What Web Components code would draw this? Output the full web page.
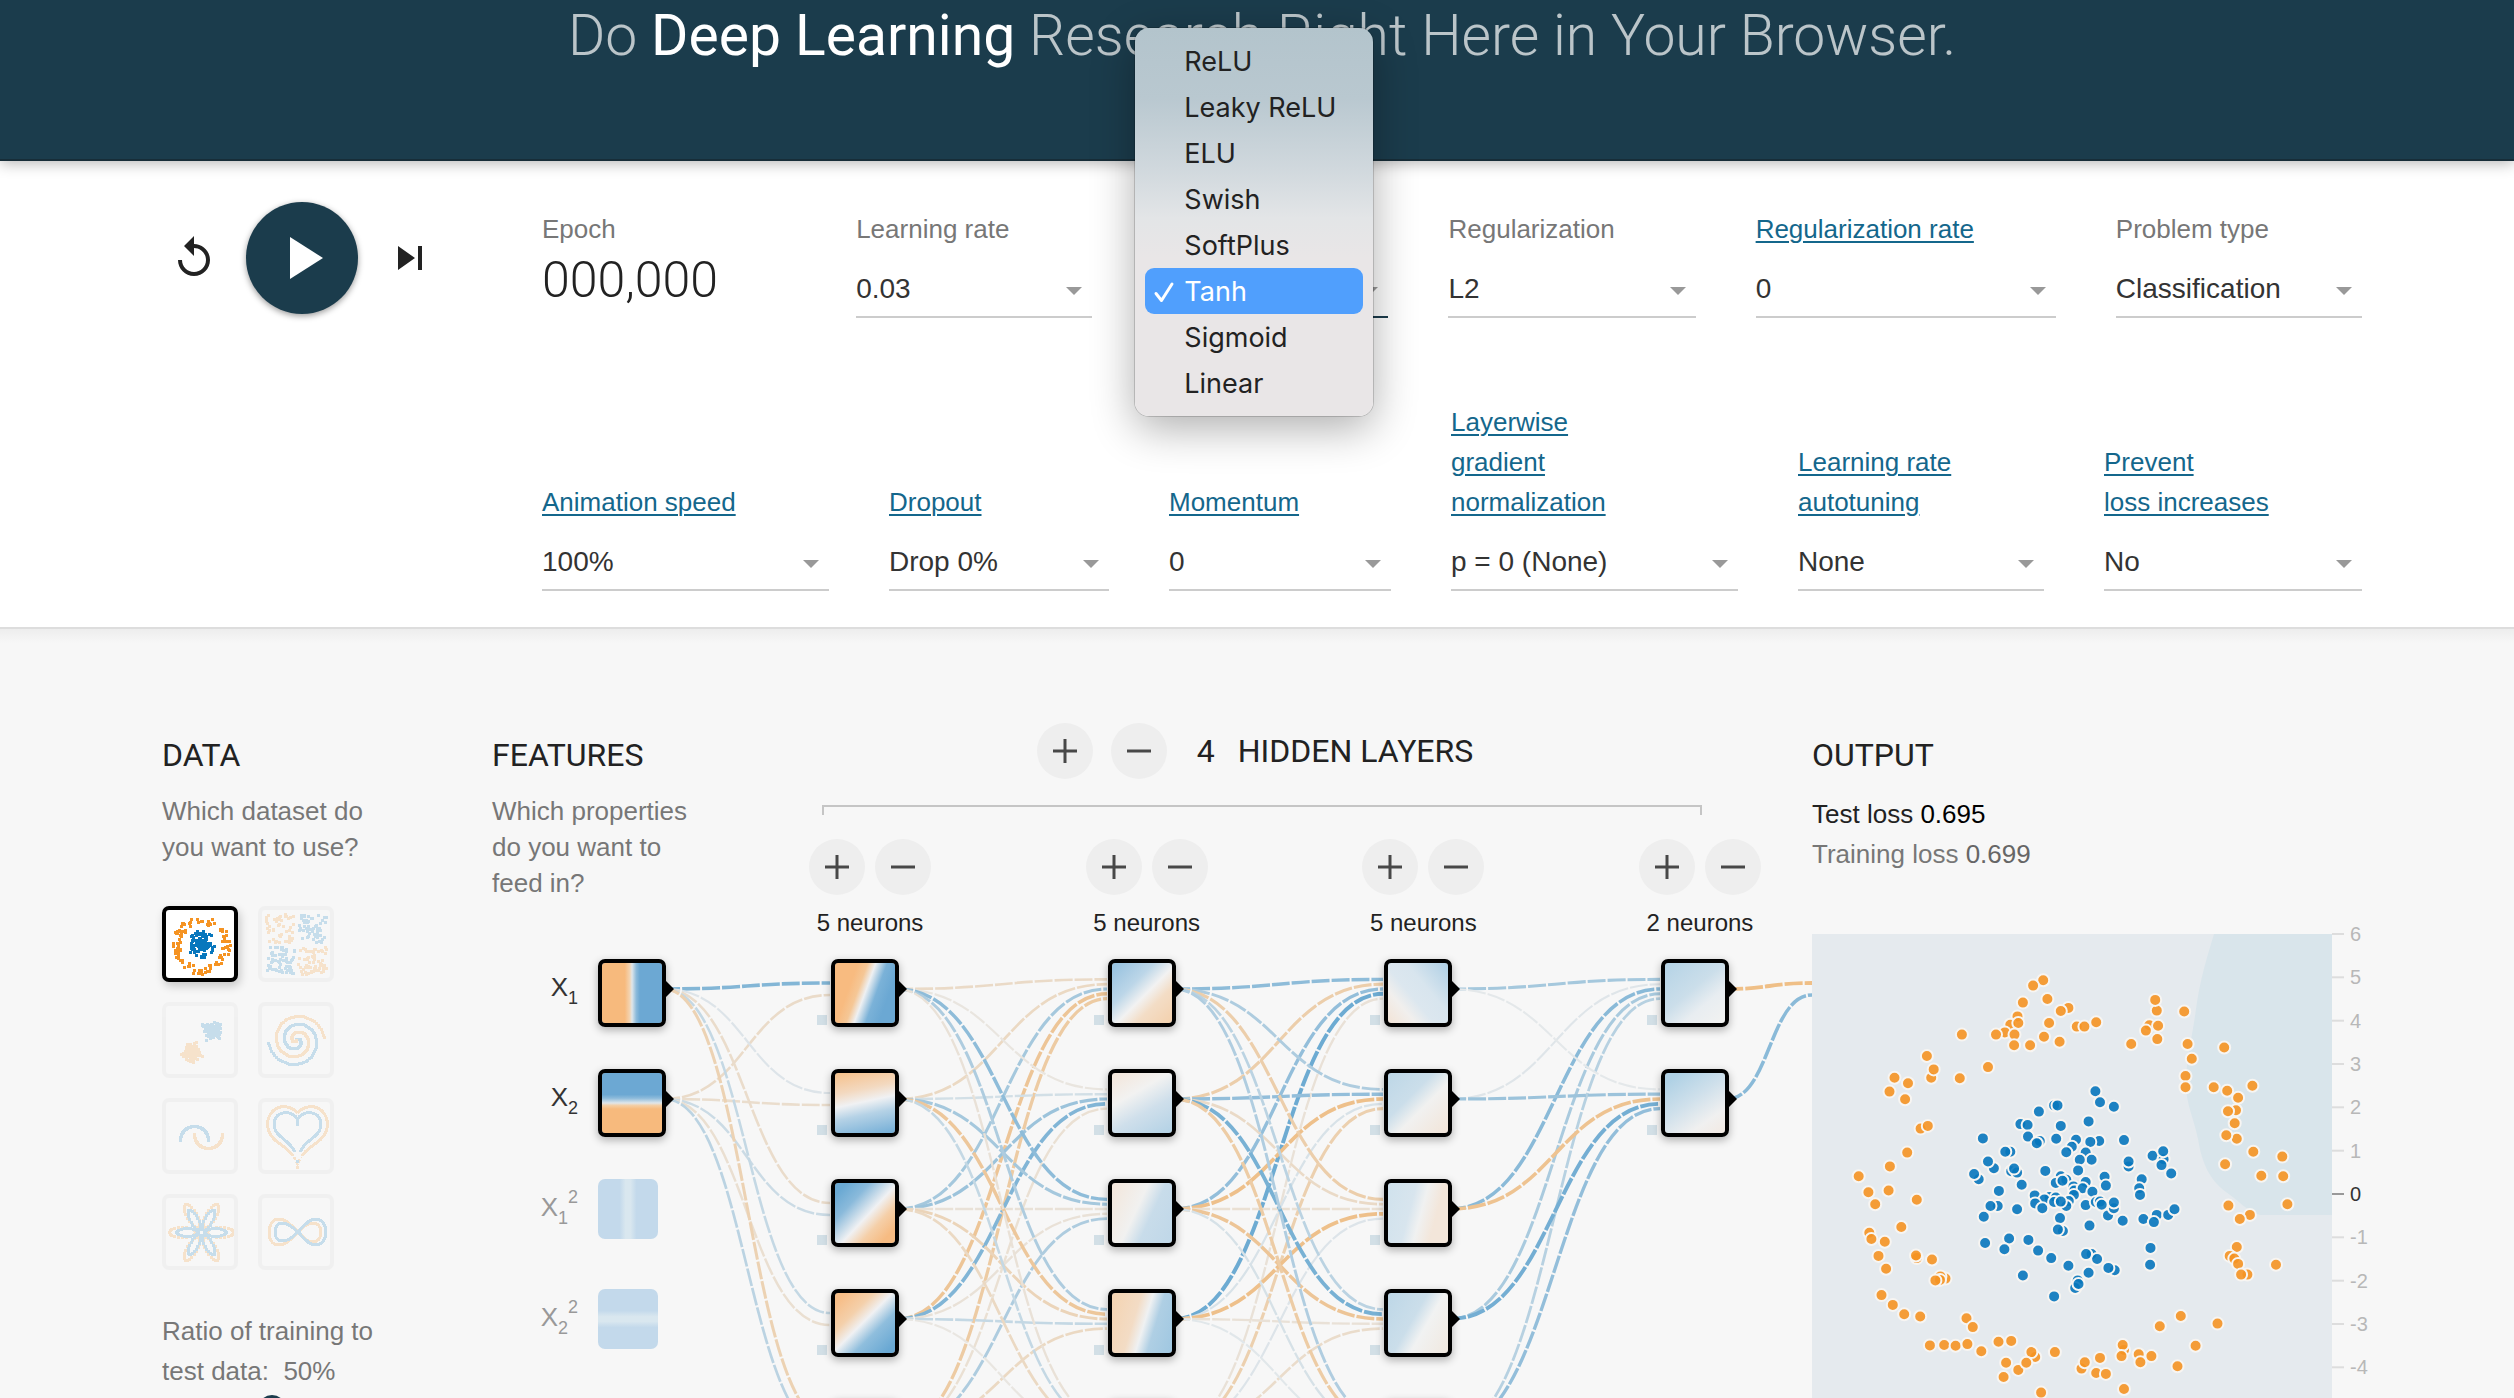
<!DOCTYPE html>
<html lang="en">
<head>
<meta charset="utf-8">
<title>Deep Learning Playground</title>
<style>
  html, body { margin: 0; background: #fff; }
  body { font-family: "Liberation Sans", Arial, sans-serif; font-size: 26px; color: #222; }
</style>
</head>
<body>
<playground-app></playground-app>

<template id="t-app">
  <style>
    :host { display: flex; flex-direction: column; height: 100vh; overflow: hidden; }
  </style>
  <page-banner>Do <b slot="strong">Deep Learning</b><span slot="rest">Research Right Here in Your Browser.</span></page-banner>
  <control-bar></control-bar>
  <main-part></main-part>
</template>

<template id="t-banner">
  <style>
    :host { display: block; box-sizing: border-box; flex: none; height: 161px; padding: 6px 152px 0 162px; background: #1b3c4c; border-bottom: 2px solid #172d38; box-shadow: 0 2px 14px rgba(0,0,0,.3); position: relative; z-index: 1; }
    h1 { margin: 0; font: 300 57px/60px Roboto, sans-serif; text-align: center; color: rgba(255,255,255,.7); white-space: nowrap; }
    ::slotted(b) { font-weight: 400; color: #fff; }
  </style>
  <h1><slot></slot><slot name="strong"></slot> <slot name="rest"></slot></h1>
</template>

<template id="t-controls">
  <style>
    :host { display: flex; flex: none; padding: 41px 152px 36px 162px; position: relative; z-index: 2; }
    .play { flex: none; width: 372px; padding-left: 8px; display: flex; gap: 28px; align-items: center; height: 112px; }
    button { border: 0; padding: 0; background: none; color: #222; display: block; width: 48px; height: 48px; }
    button svg { display: block; fill: currentColor; }
    .go { width: 112px; height: 112px; border-radius: 50%; background: #1b3c4c; color: #fff; padding: 20px; box-shadow: 0 2px 6px rgba(0,0,0,.4); }
    .rows { flex: 1; padding-top: 7px; display: flex; flex-direction: column; gap: 84px; }
    .row { display: grid; column-gap: 60px; align-items: end; }
    .r1 { grid-template-columns: 254fr 236fr 236fr 247fr 300fr 246fr; }
    .r2 { grid-template-columns: 287fr 220fr 222fr 287fr 246fr 258fr; }
    .epoch { align-self: start; color: #777; line-height: 40px; }
    .epoch output { display: block; font: 300 50px/48px Roboto, sans-serif; margin-top: 7px; color: #222; }
  </style>
  <div class="play">
    <button aria-label="Reset"><svg width="48" height="48" viewBox="0 0 24 24"><path d="M12 5V1L7 6l5 5V7c3.31 0 6 2.69 6 6s-2.69 6-6 6-6-2.69-6-6H4c0 4.42 3.58 8 8 8s8-3.58 8-8-3.58-8-8-8z"/></svg></button>
    <button class="go" aria-label="Run"><svg width="72" height="72" viewBox="0 0 24 24"><path d="M8 5v14l11-7z"/></svg></button>
    <button aria-label="Step"><svg width="48" height="48" viewBox="0 0 24 24"><path d="M6 18l8.5-6L6 6v12zM16 6v12h2V6h-2z"/></svg></button>
  </div>
  <div class="rows">
    <div class="row r1">
      <div class="epoch">Epoch<output>000,000</output></div>
      <select-field label="Learning rate" value="0.03"></select-field>
      <select-field label="Activation" value="Tanh" open><option-menu slot="menu" chosen="Tanh" items="ReLU,Leaky ReLU,ELU,Swish,SoftPlus,Tanh,Sigmoid,Linear"></option-menu></select-field>
      <select-field label="Regularization" value="L2"></select-field>
      <select-field label="Regularization rate" value="0" link></select-field>
      <select-field label="Problem type" value="Classification"></select-field>
    </div>
    <div class="row r2">
      <select-field label="Animation speed" value="100%" link></select-field>
      <select-field label="Dropout" value="Drop 0%" link></select-field>
      <select-field label="Momentum" value="0" link></select-field>
      <select-field label="Layerwise|gradient|normalization" value="p = 0 (None)" link></select-field>
      <select-field label="Learning rate|autotuning" value="None" link></select-field>
      <select-field label="Prevent|loss increases" value="No" link></select-field>
    </div>
  </div>
</template>

<template id="t-field">
  <style>
    :host { display: block; position: relative; min-width: 0; }
    label { display: block; color: #777; line-height: 40px; white-space: nowrap; }
    a { color: #14678c; text-decoration: underline; text-decoration-thickness: 2px; text-underline-offset: 3px; }
    .box { display: grid; }
    .box > * { grid-area: 1 / 1; }
    select { appearance: none; width: 100%; height: 69px; padding: 24px 30px 11px 0; border: 0; border-bottom: 2px solid #ccc; border-radius: 0; background: none; font: 28px/32px "Liberation Sans", Arial, sans-serif; color: #333; }
    :host([open]) select { border-color: #1b3c4c; }
    svg { justify-self: end; margin: 38px 10px 0 0; pointer-events: none; fill: #999; }
    ::slotted(option-menu) { position: absolute; left: -17px; bottom: -98px; z-index: 3; }
  </style>
  <label for="s"></label>
  <div class="box"><select id="s"><option></option></select><svg width="16" height="8"><path d="M0 0H16L8 8Z"/></svg></div>
  <slot name="menu"></slot>
</template>

<template id="t-menu">
  <style>
    :host { display: block; width: 238px; box-sizing: border-box; padding: 10px; border-radius: 14px; background: linear-gradient(#b3c4cc 0, #b9c8d0 70px, #d0d8dd 140px, #e3e5e7 190px, #e9e6e7 230px); box-shadow: 0 0 0 1px rgba(0,0,0,.16), 0 12px 44px rgba(0,0,0,.32); }
    div { display: flex; flex-direction: column; }
    button { display: flex; align-items: center; height: 46px; padding: 2px 0 0; border: 0; border-radius: 9px; background: none; font: 27px/32px Inter, sans-serif; color: #222; text-align: left; }
    button svg { width: 39px; height: 24px; flex: none; }
    button[aria-selected=true] { background: #509ffd; color: #fff; }
  </style>
  <div role="listbox" aria-label="Activation"></div>
</template>

<template id="t-main">
  <style>
    :host { display: grid; grid-template-columns: 330px 1fr 550px; flex: 1; min-height: 0; padding: 94px 152px 0 162px; border-top: 2px solid #ddd; background: linear-gradient(#ededed, #f7f7f7 14px); }
  </style>
  <data-panel></data-panel>
  <network-panel></network-panel>
  <output-panel></output-panel>
</template>

<template id="t-data">
  <style>
    :host { display: block; padding-top: 13px; }
    h2 { margin: 0 0 19px; font: 400 32px/38px Roboto, sans-serif; }
    p { margin: 0 0 41px; width: 220px; line-height: 36px; color: #777; }
    .grid { display: grid; grid-template-columns: 76px 76px; gap: 20px; margin-bottom: 41px; }
    label { display: block; width: 230px; line-height: 40px; color: #777; white-space: pre-line; }
    input { appearance: none; display: block; width: 220px; height: 28px; margin: 4px 0 0; background: linear-gradient(#bbb,#bbb) center / 100% 4px no-repeat; }
    input::-webkit-slider-thumb { appearance: none; width: 28px; height: 28px; border-radius: 50%; background: #1b3c4c; }
  </style>
  <h2>DATA</h2>
  <p>Which dataset do you want to use?</p>
  <div class="grid">
    <data-thumb kind="circle" selected></data-thumb><data-thumb kind="xor"></data-thumb>
    <data-thumb kind="gauss"></data-thumb><data-thumb kind="spiral"></data-thumb>
    <data-thumb kind="moons"></data-thumb><data-thumb kind="heart"></data-thumb>
    <data-thumb kind="flower"></data-thumb><data-thumb kind="infinity"></data-thumb>
  </div>
  <label for="ratio">Ratio of training to
test data:&nbsp; 50%</label>
  <input id="ratio" type="range" min="10" max="90" value="50">
</template>

<template id="t-thumb">
  <style>
    :host { display: block; }
    button { display: block; box-sizing: border-box; width: 76px; height: 76px; padding: 0; border: 4px solid rgba(0,0,0,.12); border-radius: 7px; background: none; opacity: .2; overflow: hidden; }
    :host([selected]) button { border-color: #000; background: #fff; opacity: 1; box-shadow: 2px 4px 10px rgba(0,0,0,.2); }
    svg { display: block; }
  </style>
  <button></button>
</template>

<template id="t-net">
  <style>
    :host { display: block; }
    .top { display: flex; height: 236px; }
    .intro { flex: none; width: 317px; padding-top: 13px; }
    h2 { margin: 0 0 19px; font: 400 32px/38px Roboto, sans-serif; }
    .intro p { margin: 0; width: 206px; line-height: 36px; color: #777; }
    .layers { width: 952px; }
    .count { display: flex; justify-content: center; align-items: center; gap: 18px; margin: 0 59px 26px 13px; padding-right: 14px; height: 56px; font: 400 32px/38px Roboto, sans-serif; }
    .count span { margin-left: 12px; }
    .count strong { font-weight: 400; margin-left: 5px; }
    .bracket { height: 8px; margin: 0 59px 24px 13px; border: 2px solid #c5c5c5; border-bottom: 0; }
    .groups { display: flex; justify-content: space-between; }
    .group { width: 122px; display: flex; flex-wrap: wrap; justify-content: space-between; font-size: 24px; line-height: 32px; }
    .group div { width: 100%; text-align: center; margin-top: 12px; white-space: nowrap; }
    .graph { position: relative; height: 560px; }
    .graph > svg { display: block; width: 100%; height: 560px; overflow: visible; }
    graph-node { position: absolute; }
    sub, sup { font-size: 18px; line-height: 0; }
    sub { vertical-align: -8px; }
    sup { vertical-align: 13px; }
  </style>
  <div class="top">
    <div class="intro"><h2>FEATURES</h2><p>Which properties do you want to feed in?</p></div>
    <div class="layers">
      <div class="count"><round-button kind="plus"></round-button><round-button kind="minus"></round-button><span>4</span><strong>HIDDEN LAYERS</strong></div>
      <div class="bracket"></div>
      <div class="groups"></div>
    </div>
  </div>
  <div class="graph"></div>
</template>

<template id="t-round">
  <style>
    :host { display: block; }
    button { display: block; width: 56px; height: 56px; padding: 0; border: 0; border-radius: 50%; background: #eee; }
    svg { display: block; margin: auto; stroke: #484848; stroke-width: 3; }
  </style>
  <button><svg width="24" height="24"><path/></svg></button>
</template>

<template id="t-node">
  <style>
    :host { display: flex; }
    .name { position: absolute; right: 100%; margin-right: 20px; line-height: 32px; padding-top: 12px; white-space: nowrap; color: #333; }
    .map { box-sizing: border-box; width: 68px; height: 68px; border: 4px solid #000; border-radius: 7px; box-shadow: 0 3px 8px rgba(0,0,0,.3); background: var(--map) padding-box; }
    :host([off]) .map { width: 60px; height: 60px; border: 0; box-shadow: none; }
    :host([off]) .name { color: #999; }
  </style>
  <div class="name"><slot></slot></div><div class="map"></div>
</template>

<template id="t-out">
  <style>
    :host { display: block; padding-top: 13px; }
    h2 { margin: 0 0 20px; font: 400 32px/38px Roboto, sans-serif; }
    p { margin: 0; line-height: 40px; }
    p b { font-weight: 400; color: #000; }
    .train { color: #777; }
    .train b { color: #666; }
    svg { display: block; margin-top: 60px; overflow: visible; font: 20px "Liberation Sans", Arial, sans-serif; }
  </style>
  <h2>OUTPUT</h2>
  <p>Test loss <b>0.695</b></p>
  <p class="train">Training loss <b>0.699</b></p>
</template>

<script>
const ORANGE = '#f59322', BLUE = '#0877bd';
class Part extends HTMLElement {
  constructor(id) {
    super();
    this.attachShadow({ mode: 'open' }).append(document.getElementById(id).content.cloneNode(true));
  }
  $(q) { return this.shadowRoot.querySelector(q); }
}
const define = (tag, id, ready) => customElements.define(tag, class extends Part {
  constructor() { super(id); }
  connectedCallback() { if (ready && !this.done) { this.done = true; ready(this); } }
});

define('page-banner', 't-banner');

define('option-menu', 't-menu', el => {
  el.$('div').innerHTML = el.getAttribute('items').split(',').map(name => {
    const on = name === el.getAttribute('chosen');
    return `<button role="option" aria-selected="${on}"><svg viewBox="0 0 39 24">${on ? '<path d="M11 13.500L16.500 20.500L27 4" fill="none" stroke="#fff" stroke-width="3" stroke-linecap="round" stroke-linejoin="round"/>' : ''}</svg>${name}</button>`;
  }).join('');
});

define('select-field', 't-field', el => {
  const text = el.getAttribute('label').replaceAll('|', '<br>');
  el.$('label').innerHTML = el.hasAttribute('link') ? `<a href="#">${text}</a>` : text;
  el.$('option').textContent = el.getAttribute('value');
});

define('control-bar', 't-controls');

define('round-button', 't-round', el => {
  const plus = el.getAttribute('kind') === 'plus';
  el.$('button').setAttribute('aria-label', plus ? 'Add' : 'Remove');
  el.$('path').setAttribute('d', plus ? 'M0 12H24M12 0V24' : 'M0 12H24');
});

/* small dataset pictures: squares of 3px in a 68px field */
const makeRandom = seed => () => (seed = (seed * 16807) % 2147483647) / 2147483647;
function thumbPoints(kind) {
  const rnd = makeRandom(4711), out = [];
  const add = (x, y, c) => out.push([Math.round(x), Math.round(y), c]);
  const normal = () => (rnd() + rnd() + rnd() + rnd() - 2) * 1.7;
  if (kind === 'circle') {
    for (let i = 0; i < 110; i++) { const a = rnd() * 6.283, r = 21 + rnd() * 8; add(35 + r * Math.sin(a), 35 + r * Math.cos(a), ORANGE); }
    for (let i = 0; i < 130; i++) { const a = rnd() * 6.283, r = rnd() * 14; add(35 + r * Math.sin(a), 34 + r * Math.cos(a), BLUE); }
  } else if (kind === 'xor') {
    for (let i = 0; i < 240; i++) {
      let x = rnd() * 56 - 28, y = rnd() * 56 - 28; x += Math.sign(x) * 2; y += Math.sign(y) * 2;
      add(34 + x, 34 - y, x * y > 0 ? BLUE : ORANGE);
    }
  } else if (kind === 'gauss') {
    for (let i = 0; i < 130; i++) { add(46 + normal() * 4, 24 + normal() * 4, BLUE); add(25 + normal() * 4, 46 + normal() * 4, ORANGE); }
  } else if (kind === 'spiral') {
    for (const [d, c] of [[0, BLUE], [Math.PI, ORANGE]])
      for (let i = 0; i < 110; i++) { const k = i / 110, t = 3.5 * Math.PI * k + d; add(34 + 28 * k * Math.sin(t), 34 - 28 * k * Math.cos(t), c); }
  } else if (kind === 'moons') {
    for (let i = 0; i <= 50; i++) { const a = Math.PI * i / 50; add(28 - 14 * Math.cos(a), 38 - 14 * Math.sin(a), BLUE); add(42 - 14 * Math.cos(a), 32 + 14 * Math.sin(a), ORANGE); }
  } else if (kind === 'flower') {
    for (const [far, len, wide, c] of [[19, 13, 5, ORANGE], [14, 11, 4, BLUE]])
      for (let p = 0; p < 6; p++)
        for (let i = 0; i < 20; i++) {
          const t = i / 20 * 6.2832, a = p * Math.PI / 3, u = far + len * Math.cos(t), v = wide * Math.sin(t);
          add(35 + u * Math.cos(a) - v * Math.sin(a), 34 + u * Math.sin(a) + v * Math.cos(a), c);
        }
  }
  return out;
}
const thumbPaths = {
  heart: `<path stroke="${ORANGE}" d="M35.500 11C29 3 17 3 11 9C3 17 4 30 13 38C20 44 27 47 31 54M35.500 11C42 3 54 3 60 9C68 17 67 30 58 38C51 44 44 47 40 54"/>
    <path stroke="${BLUE}" d="M35.500 24V17C31 10 22 9 16 13C10 19 11 28 18 34C24 39 30 43 33 50M35.500 17C40 10 49 9 55 13C61 19 60 28 53 34C47 39 41 43 38 50"/>
    <path stroke="${ORANGE}" stroke-dasharray="3 2" d="M32 55L35.500 62L39 55M34 65H37"/><path stroke="${BLUE}" d="M34 59H37"/>`,
  infinity: `<path stroke="${ORANGE}" d="M36 34C30 28 24 21 17 21C10 21 7 28 7 34C7 41 10 47 17 47C24 47 30 41 36 34C41 29 45 25 50 25C56 25 59 29 59 34C59 40 56 44 50 44C45 44 41 39 36 34Z"/>
    <path stroke="${BLUE}" d="M36 34C30 29 26 25 21 25C15 25 13 29 13 34C13 40 15 43 21 43C26 43 30 40 36 34C42 28 47 21 53 21C60 21 64 27 64 34C64 41 60 47 53 47C47 47 42 40 36 34Z"/>`
};
define('data-thumb', 't-thumb', el => {
  const kind = el.getAttribute('kind');
  const body = thumbPaths[kind] ? `<g fill="none" stroke-width="3">${thumbPaths[kind]}</g>`
    : thumbPoints(kind).map(([x, y, c]) => `<rect x="${x - 1}" y="${y - 1}" width="3" height="3" fill="${c}"/>`).join('');
  el.$('button').setAttribute('aria-label', kind);
  el.$('button').innerHTML = `<svg width="68" height="68" shape-rendering="crispEdges">${body}</svg>`;
});
define('data-panel', 't-data');

define('graph-node', 't-node');

/* weights[layer][destination][source] */
const weights = [
  [[.45, -.17], [.05, -.15], [-.16, .13], [.16, -.13], [-.28, .2]],
  [[-.18, -.2, .3, -.42, -.36], [-.06, .1, .34, .46, -.12], [.4, .3, -.1, -.1, .26], [.26, -.4, -.25, .16, -.2], [-.1, .16, -.2, -.05, .1]],
  [[.4, -.32, .38, .55, -.1], [.26, .38, -.48, .07, -.3], [-.32, -.18, -.12, -.48, .05], [.2, .5, -.42, -.1, -.16], [.25, -.35, .08, .03, .1]],
  [[.3, .04, .42, .28, .22], [.02, .34, -.45, .52, .38]],
  [[-.5, .42]]
];
const columns = [106, 339, 616, 892, 1169, 1320];
const maps = [
  ['linear-gradient(90deg,#f7ba7d 38%,#f3d3b0 46%,#dfe6ea 50%,#8dbbdb 57%,#6ca8d3 63%)', 'linear-gradient(#6ca8d3 36%,#8dbbdb 42%,#dfe6ea 50%,#f3cfa6 54%,#f7ba7d 60%)',
   'linear-gradient(90deg,#c3d9eb 36%,#d9e7ef 46%,#d9e7ef 54%,#c3d9eb 64%)', 'linear-gradient(#c3d9eb 36%,#d9e7ef 46%,#d9e7ef 54%,#c3d9eb 64%)'],
  ['linear-gradient(110deg,#f8bb80 28%,#f5c796 40%,#eef0f2 50%,#7bb2d8 64%,#6ba8d3 80%)', 'linear-gradient(168deg,#f6c08a,#f3d9c0 30%,#f0f1f3 48%,#b5d2e6 66%,#72add6)',
   'linear-gradient(133deg,#6aa9d3 10%,#8abadb 30%,#f0f1f3 54%,#f5cfa8 70%,#f6bb82 88%)', 'linear-gradient(135deg,#f7bd86 8%,#f4d0ab 32%,#f0f1f3 48%,#8fbedd 66%,#69a8d3 92%)', 'linear-gradient(#000,#000)'],
  ['linear-gradient(135deg,#99c3e0 5%,#bcd6e8 35%,#f2f2f2 54%,#f3ddc6 70%,#f3d0ac)', 'linear-gradient(150deg,#f3e5d9,#f2f2f1 35%,#cfdfeb 62%,#b2d1e5)',
   'linear-gradient(115deg,#f3e6da,#f1f1f0 42%,#c8dcea 62%,#bfd7e8)', 'linear-gradient(107deg,#f4d3b0,#f3dcc5 38%,#eff1f2 53%,#afcfe4 68%,#9fc7e1)', 'linear-gradient(#000,#000)'],
  ['linear-gradient(50deg,#f3e4d7,#f1efed 25%,#dce7ef 42%,#d8e5ee 62%,#aecfe5)', 'linear-gradient(135deg,#bdd7e7,#cbdeea 38%,#f1f1f0 58%,#f2e4d8)',
   'linear-gradient(105deg,#d0e2ed,#d8e5ee 38%,#f0f1f1 54%,#f3e6da 75%)', 'linear-gradient(120deg,#bdd7e7,#cbdeea 42%,#f1f2f2 60%,#f0e8df)', 'linear-gradient(#000,#000)'],
  ['linear-gradient(140deg,#b4d3e6,#cbdeea 45%,#e8edf1 68%,#f2f2f1)', 'linear-gradient(145deg,#afd1e5 10%,#cfe0eb 45%,#f0f0f0 76%,#f2e9e2)']
];
const mix = w => {
  const from = [232, 234, 235], to = w < 0 ? [245, 147, 34] : [8, 119, 189], k = Math.abs(w);
  return `rgb(${from.map((v, i) => Math.round(v + (to[i] - v) * k))})`;
};
define('network-panel', 't-net', el => {
  el.$('.groups').innerHTML = [5, 5, 5, 2].map(n => `<div class="group"><round-button kind="plus"></round-button><round-button kind="minus"></round-button><div>${n} neurons</div></div>`).join('');
  let svg = '';
  weights.forEach((layer, l) => layer.forEach((sources, d) => sources.forEach((w, s) => {
    const n = sources.length, x0 = columns[l] + 66, x1 = columns[l + 1] - (l < 4 ? 1 : 0);
    const y0 = 30 + s * 110, y1 = 30 + d * 110 + (s - (n - 1) / 2) / n * 24, m = (x0 + x1) / 2;
    svg += `<path d="M${x0} ${y0}C${m} ${y0} ${m} ${y1} ${x1} ${y1}" fill="none" stroke="${mix(w)}" stroke-width="${2 + 3.6 * Math.abs(w)}" stroke-dasharray="18 2" stroke-dashoffset="2"/>`;
  })));
  let nodes = '';
  const names = ['X<sub>1</sub>', 'X<sub>2</sub>', 'X<sub>1</sub><sup>2</sup>', 'X<sub>2</sub><sup>2</sup>'];
  maps.forEach((list, l) => list.forEach((map, i) => {
    const x = columns[l], y = i * 110, off = l === 0 && i > 1;
    if (!off) svg += `<path d="M${x + 67} ${y + 21}L${x + 76} ${y + 30}L${x + 67} ${y + 39}Z"/>`;
    if (l) svg += `<rect x="${x - 14}" y="${y + 56}" width="10" height="10" fill="#d2dfe6"/>`;
    nodes += `<graph-node ${off ? 'off' : ''} style="left:${x}px;top:${y}px;--map:${map}">${l ? '' : names[i]}</graph-node>`;
  }));
  el.$('.graph').innerHTML = `<svg>${svg}</svg>${nodes}`;
});

/* sample positions on a 1235 x 1168 field whose corner is (76, 526) */
const orange = '625,630 601,642 635,672 577,680 685,692 667,699 564,711 547,730 566,726 639,726 705,734 723,734 751,724 534,747 513,752 557,752 432,752 627,757 664,768 556,776 594,776 349,800 494,825 359,849 365,830 427,850 272,849 304,861 260,880 297,897 334,963 351,957 302,1017 261,1048 187,1070 210,1106 258,1102 226,1133 325,1123 288,1184 212,1197 217,1211 249,1217 234,1249 325,1254 323,1248 361,1257 252,1278 393,1300 381,1295 380,1303 369,1304 241,1337 268,1359 295,1380 333,1385 443,1389 458,1409 356,1450 390,1449 417,1451 445,1447 478,1463 519,1442 549,1440 606,1476 597,1465 653,1465 537,1489 566,1505 585,1489 531,1521 620,1556 895,698 891,674 960,700 877,731 898,732 869,743 896,762 834,773 968,773 1055,781 978,806 963,845 963,870 1030,870 1122,867 1062,878 1088,894 1083,922 1064,924 1080,951 1085,986 1060,978 1124,1015 1193,1026 1057,1043 1143,1069 1195,1070 1065,1136 1205,1133 1116,1157 1092,1166 1085,1229 1068,1249 1079,1255 1088,1267 1178,1269 1110,1291 1095,1291 952,1384 1039,1401 902,1407 817,1460 814,1449 987,1451 852,1470 811,1474 882,1474 760,1478 716,1502 724,1488 856,1488 944,1497 751,1512 774,1514 817,1548';
const blue = '749,879 760,904 793,914 651,911 659,911 615,925 733,947 571,953 588,955 667,957 589,981 617,991 610,996 482,985 656,986 703,988 758,991 737,993 817,989 693,1004 680,1016 726,1017 547,1015 535,1015 740,1033 712,1033 885,1024 911,1032 910,1014 906,1045 828,1048 828,1037 508,1052 494,1037 472,1077 461,1065 549,1059 563,1062 556,1053 630,1058 708,1057 929,1064 574,1089 667,1070 655,1085 680,1078 671,1080 726,1083 771,1071 774,1091 859,1077 520,1103 697,1093 699,1102 719,1097 742,1105 853,1097 855,1112 605,1113 698,1112 640,1117 655,1118 628,1122 606,1131 623,1142 517,1137 500,1137 563,1144 651,1128 686,1126 680,1137 667,1127 726,1135 750,1128 760,1127 764,1134 779,1158 793,1142 793,1129 484,1161 665,1164 814,1170 863,1166 895,1157 888,1173 922,1157 937,1144 735,1181 672,1193 660,1190 544,1210 487,1220 533,1234 590,1213 613,1237 880,1231 644,1254 740,1245 753,1256 727,1245 879,1269 685,1271 795,1281 780,1276 733,1287 577,1293 707,1304 701,1321 709,1312 651,1340';
define('output-panel', 't-out', el => {
  const pt = (x, y) => [((x - 76) / 2.375).toFixed(1), ((y - 526) / 2.246).toFixed(1)];
  const dots = (list, c) => list.split(' ').map(p => { const [x, y] = pt(...p.split(',')); return `<circle cx="${x}" cy="${y}" r="6" fill="${c}" fill-opacity=".9" stroke="#f7f5f2" stroke-width="2"/>`; }).join('');
  let axis = '';
  for (let v = 6; v >= -4; v--) {
    const y = 260 - v * 260 / 6;
    axis += `<path d="M520 ${y.toFixed(1)}h12" stroke="${v ? '#ddd' : '#999'}" stroke-width="2"/><text x="538" y="${(y + 7).toFixed(1)}" fill="${v ? '#b8b8b8' : '#333'}">${v}</text>`;
  }
  const svg = `<svg width="550" height="520"><path fill="#e5eaee" d="M0 0H520V520H0Z"/><path fill="#d9e5eb" d="M402 0H520V281H448C436 278 426 266 414 258C398 246 390 230 386 205C382 185 374 170 374 150C374 125 380 105 384 75C388 45 396 20 402 0Z"/>${axis}${dots(orange, ORANGE)}${dots(blue, BLUE)}</svg>`;
  el.shadowRoot.append(document.createRange().createContextualFragment(svg));
});
define('main-part', 't-main');
define('playground-app', 't-app');
</script>
</body>
</html>
